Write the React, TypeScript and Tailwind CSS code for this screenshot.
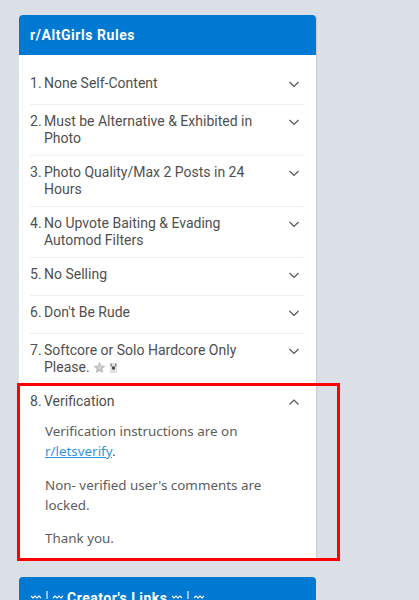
const PLEX = "font-['Roboto',sans-serif]";

function Chevron({ up = false }: { up?: boolean }) {
  return (
    <svg width="20" height="20" viewBox="0 0 20 20" className="-mt-[1px] shrink-0" fill="none">
      <path
        d={up ? "M5.5 12.5 10 8l4.5 4.5" : "M5.5 8 10 12.5 14.5 8"}
        stroke="#555"
        strokeWidth="1.2"
      />
    </svg>
  );
}

function Row({ n, children, up = false, last = false }: { n: number; children: React.ReactNode; up?: boolean; last?: boolean }) {
  return (
    <div className={`flex items-start pt-2 ${last ? "pb-[7px]" : "border-b border-[#edeff1] pb-2"}`}>
      <div className="w-[14px] shrink-0 text-[14px] leading-[17px]">{n}.</div>
      <div className="min-h-[21px] flex-1 pr-4 text-[14px] leading-[17px]">{children}</div>
      <div className="mr-[1px] flex w-5 justify-end">
        <Chevron up={up} />
      </div>
    </div>
  );
}

function Emoji() {
  return (
    <span className="ml-[3px] inline-flex items-center gap-[3px] align-[-2px]">
      <svg width="13" height="13" viewBox="0 0 13 13">
        <path d="M6.5 .5 8.3 4.4l4.2.5-3.1 2.9.8 4.2-3.7-2.1-3.7 2.1.8-4.2L.5 4.9l4.2-.5z" fill="#bdbdbd" />
        <path d="M6.5 4 8.5 6l-.8 2.6H5.3L4.5 6z" fill="#d4d4d4" />
      </svg>
      <svg width="9" height="12" viewBox="0 0 9 12">
        <path d="M1 1h7v10H1z" fill="#e0e0e0" />
        <path d="M1.5 1.5h1.5v3H1.5zM6 1.5h1.5v3H6z" fill="#8a8a8a" />
        <path d="M3.2 4.5h2.6v3H3.2z" fill="#333" />
      </svg>
    </span>
  );
}

function Ornament() {
  return (
    <svg width="34" height="10" viewBox="0 0 34 10" className="-mt-[6px] shrink-0" fill="none" stroke="#ffffff" strokeWidth="1.1">
      <path d="M1 6l2 2 2-2 2 2 2-2 2 2M17 1v8M23 8l2-2 2 2 2-2 2 2 2-2" />
    </svg>
  );
}

export default function App() {
  return (
    <div className={`relative h-[600px] w-[419px] overflow-hidden bg-[#dae0e6] pl-[19px] pt-[15px] ${PLEX}`}>
      <div className="w-[297px] rounded-t-[4px] bg-white shadow-[1px_0_0_#c8ccd0]">
        <div className="flex h-[40px] items-center rounded-t-[4px] bg-[#0079d3] px-[11px] text-[14px] font-bold tracking-[0.55px] text-white">
          r/AltGirls Rules
        </div>
        <div className="px-[11px] pb-[11px] pt-[12px] text-[#4f4f4f]">
          <Row n={1}>None Self-Content</Row>
          <Row n={2}>Must be Alternative &amp; Exhibited in Photo</Row>
          <Row n={3}>Photo Quality/Max 2 Posts in 24 Hours</Row>
          <Row n={4}>No Upvote Baiting &amp; Evading Automod Filters</Row>
          <Row n={5}>No Selling</Row>
          <Row n={6}>Don't Be Rude</Row>
          <Row n={7}>
            Softcore or Solo Hardcore Only Please.
            <Emoji />
          </Row>
          <Row n={8} up last>
            Verification
          </Row>
          <div className="pl-[15px] font-['Noto_Sans',sans-serif] text-[13.4px] leading-[20px] text-[#5c5c5c]">
            <p className="mb-[13.5px]">
              Verification instructions are on{" "}
              <a className="text-[#3394dc] underline">r/letsverify</a>.
            </p>
            <p className="mb-[13.5px]">Non- verified user's comments are locked.</p>
            <p>Thank you.</p>
          </div>
        </div>
      </div>

      <div className="mt-[18px] w-[297px] rounded-t-[4px] bg-[#0079d3]">
        <div className="flex h-[40px] items-center gap-[3px] px-[11px] pt-[2px] text-[14px] font-bold tracking-[0.5px] text-white">
          <Ornament />
          <span>Creator's Links</span>
          <Ornament />
        </div>
      </div>

      <div className="absolute left-[17px] top-[383px] h-[178px] w-[323px] border-[3px] border-[#ff0000]" />
    </div>
  );
}
